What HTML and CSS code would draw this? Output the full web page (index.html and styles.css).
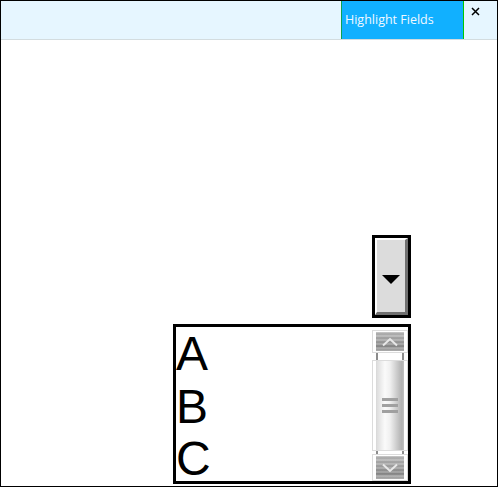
FILE: index.html
```html
<!DOCTYPE html>
<html lang="en">
<head>
    <meta charset="UTF-8">
    <title>Highlight Fields</title>
    <link rel="stylesheet" href="styles.css">
</head>
<body>
    <div class="window">
        <div class="toolbar">
            <div class="highlight-button">Highlight Fields</div>
            <div class="close-button">
                <svg width="9" height="9" viewBox="0 0 9 9"><path d="M1 1 L8 8 M8 1 L1 8" stroke="#000" stroke-width="1.5" fill="none"/></svg>
            </div>
        </div>
        <div class="form-area">
            <div class="dropdown-button">
                <div class="bevel"><span class="arrow"></span></div>
            </div>
            <div class="listbox">
                <div class="options">
                    <div class="option">A</div>
                    <div class="option">B</div>
                    <div class="option">C</div>
                </div>
                <div class="scrollbar">
                    <div class="scroll-btn scroll-up">
                        <svg width="18" height="10" viewBox="0 0 18 10"><path d="M2 8.5 L9 2 L16 8.5" stroke="#e8e8e8" stroke-width="2" fill="none"/></svg>
                    </div>
                    <div class="scroll-gap gap-top"></div>
                    <div class="scroll-thumb">
                        <span class="grip"></span>
                        <span class="grip"></span>
                        <span class="grip"></span>
                    </div>
                    <div class="scroll-gap gap-bottom"></div>
                    <div class="scroll-btn scroll-down">
                        <svg width="18" height="10" viewBox="0 0 18 10"><path d="M2 1.5 L9 8 L16 1.5" stroke="#e8e8e8" stroke-width="2" fill="none"/></svg>
                    </div>
                </div>
            </div>
        </div>
    </div>
</body>
</html>
```

FILE: styles.css
```css
* {
    margin: 0;
    padding: 0;
    box-sizing: border-box;
}

html, body {
    width: 498px;
    height: 487px;
    overflow: hidden;
    background: #fff;
}

.window {
    width: 498px;
    height: 487px;
    border: 1px solid #000;
    font-family: "Open Sans", "Noto Sans", sans-serif;
}

.toolbar {
    height: 39px;
    display: flex;
    justify-content: flex-end;
    background: #e6f6ff;
    border-bottom: 1px solid #d3dcdf;
}

.highlight-button {
    width: 123px;
    height: 38px;
    padding-left: 3px;
    line-height: 37px;
    font-size: 12.5px;
    color: #f0f8ff;
    background: #11b0ff;
    border-left: 1px solid #10a050;
    border-right: 1px solid #00c800;
}

.close-button {
    width: 33px;
    padding: 6px 0 0 7px;
}

.close-button svg {
    display: block;
}

.form-area {
    display: flex;
    flex-direction: column;
    align-items: flex-end;
    padding: 195px 86px 0 0;
    gap: 6px;
}

.dropdown-button {
    width: 39px;
    height: 83px;
    border: 3px solid #000;
}

.bevel {
    height: 100%;
    display: flex;
    align-items: center;
    justify-content: center;
    background: #dcdcdc;
    border-style: solid;
    border-width: 2px 3px 3px 2px;
    border-color: #fff #707070 #707070 #fff;
}

.arrow {
    width: 0;
    height: 0;
    margin-top: 6px;
    border-left: 9px solid transparent;
    border-right: 9px solid transparent;
    border-top: 9px solid #000;
}

.listbox {
    width: 238px;
    height: 160px;
    border: 3px solid #000;
    display: flex;
}

.options {
    flex: 1;
    padding-top: 5px;
    display: flex;
    flex-direction: column;
    gap: 8.5px;
    font-family: "Liberation Sans", Arial, sans-serif;
    font-size: 48px;
    color: #000;
}

.option {
    height: 44px;
    line-height: 44px;
}

.scrollbar {
    width: 36px;
    padding-top: 3px;
    display: flex;
    flex-direction: column;
    background: #fff;
}

.scroll-btn {
    padding: 1px 3px;
    display: flex;
    align-items: center;
    justify-content: center;
    border: 1px solid #dcdcdc;
    background-clip: content-box;
    background-color: #aaa;
    background-image:
        repeating-linear-gradient(180deg, rgba(255, 255, 255, 0.15) 0, rgba(255, 255, 255, 0.15) 2px, rgba(0, 0, 0, 0.05) 2px, rgba(0, 0, 0, 0.05) 4px),
        linear-gradient(180deg, #bcbcbc 0%, #a4a4a4 45%, #8c8c8c 75%, #c0c0c0 100%);
}

.scroll-up {
    height: 23px;
}

.scroll-down {
    height: 27px;
}

.scroll-gap {
    margin: 0 4px;
    border-left: 2px solid #8c8c8c;
    border-right: 2px solid #8c8c8c;
}

.gap-top {
    height: 7px;
}

.gap-bottom {
    height: 3px;
}

.scroll-thumb {
    flex: 1;
    padding: 0 3px;
    display: flex;
    flex-direction: column;
    align-items: center;
    justify-content: center;
    gap: 3px;
    border: 1px solid #dcdcdc;
    background-clip: content-box;
    background-image: linear-gradient(90deg, #c4c4c4 0%, #dedede 12%, #fafafa 35%, #f0f0f0 50%, #c8c8c8 72%, #b0b0b0 85%, #dcdcdc 100%);
}

.grip {
    width: 16px;
    height: 3px;
    background: #a0a0a0;
}
```
